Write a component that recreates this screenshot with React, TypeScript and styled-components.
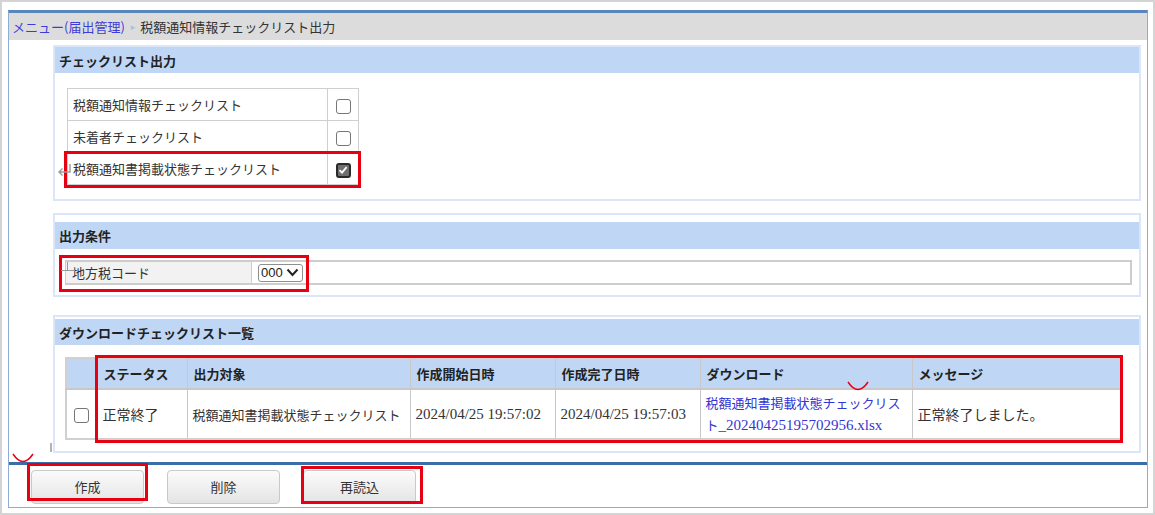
import React from 'react';
import styled, { createGlobalStyle } from 'styled-components';

const GlobalStyle = createGlobalStyle`
  html, body {
    margin: 0;
    padding: 0;
    background: #ffffff;
  }
  body {
    font-family: 'Noto Sans CJK JP', 'Liberation Sans', sans-serif;
    font-size: 13px;
    color: #333333;
  }
`;

const JA = `'Noto Sans CJK JP', 'Liberation Sans', sans-serif`;
const SERIF = `'Liberation Serif', 'Noto Sans CJK JP', serif`;

interface Rect {
  x: number;
  y: number;
  w: number;
  h: number;
}

const redBoxes: Rect[] = [
  { x: 64, y: 151, w: 297, h: 37 },
  { x: 59, y: 255, w: 250, h: 37 },
  { x: 95, y: 355, w: 1028, h: 88 },
  { x: 27, y: 463, w: 121, h: 38 },
  { x: 301, y: 466, w: 122, h: 38 },
];

const checklist = [
  { label: '税額通知情報チェックリスト', checked: false },
  { label: '未着者チェックリスト', checked: false },
  { label: '税額通知書掲載状態チェックリスト', checked: true },
];

export default function App() {
  return (
    <>
      <GlobalStyle />
      <Page>
        <Frame>
          <Breadcrumb>
            <CrumbLink href='#'>メニュー(届出管理)</CrumbLink>
            <CrumbArrow>▸</CrumbArrow>
            <CrumbCurrent>税額通知情報チェックリスト出力</CrumbCurrent>
          </Breadcrumb>

          <Content>
            <Section $mt={5} $pt={0} $pb={14}>
              <SectionHeader>チェックリスト出力</SectionHeader>
              <ChecklistTable>
                <tbody>
                  {checklist.map(item => (
                    <tr key={item.label}>
                      <LabelCell>{item.label}</LabelCell>
                      <CheckCell>
                        <CheckBox $checked={item.checked}>
                          {item.checked && (
                            <svg width='10' height='10' viewBox='0 0 10 10'>
                              <path
                                d='M1.5 5.2 L4 7.6 L8.6 2.2'
                                fill='none'
                                stroke='#ffffff'
                                strokeWidth='1.8'
                              />
                            </svg>
                          )}
                        </CheckBox>
                      </CheckCell>
                    </tr>
                  ))}
                </tbody>
              </ChecklistTable>
            </Section>

            <Section $mt={12} $pt={7} $pb={10}>
              <SectionHeader $h={27}>出力条件</SectionHeader>
              <ConditionRow>
                <ConditionLabel>地方税コード</ConditionLabel>
                <ConditionValue>
                  <Select>
                    000
                    <svg width='13' height='9' viewBox='0 0 13 9'>
                      <path
                        d='M1.5 1.5 L6.5 7 L11.5 1.5'
                        fill='none'
                        stroke='#222'
                        strokeWidth='2'
                      />
                    </svg>
                  </Select>
                </ConditionValue>
              </ConditionRow>
            </Section>

            <Section $mt={18} $pt={2} $pb={11}>
              <SectionHeader>ダウンロードチェックリスト一覧</SectionHeader>
              <ListTable>
                <colgroup>
                  <col style={{ width: 31 }} />
                  <col style={{ width: 90 }} />
                  <col style={{ width: 223 }} />
                  <col style={{ width: 145 }} />
                  <col style={{ width: 145 }} />
                  <col style={{ width: 212 }} />
                  <col style={{ width: 209 }} />
                </colgroup>
                <thead>
                  <tr>
                    <Th />
                    <Th>ステータス</Th>
                    <Th>出力対象</Th>
                    <Th>作成開始日時</Th>
                    <Th>作成完了日時</Th>
                    <Th>ダウンロード</Th>
                    <Th>メッセージ</Th>
                  </tr>
                </thead>
                <tbody>
                  <tr>
                    <Td $center>
                      <CheckBox $checked={false} />
                    </Td>
                    <Td $size={14}>正常終了</Td>
                    <Td>税額通知書掲載状態チェックリスト</Td>
                    <Td $serif>2024/04/25 19:57:02</Td>
                    <Td $serif>2024/04/25 19:57:03</Td>
                    <Td>
                      <FileLink href='#'>
                        <Ja>税額通知書掲載状態チェックリス</Ja>
                        <br />
                        <Ja>ト</Ja>_20240425195702956.xlsx
                      </FileLink>
                    </Td>
                    <Td $size={14}>正常終了しました。</Td>
                  </tr>
                </tbody>
              </ListTable>
            </Section>
          </Content>

          <Footer>
            <ActionButton type='button'>作成</ActionButton>
            <ActionButton type='button'>削除</ActionButton>
            <ActionButton type='button'>再読込</ActionButton>
          </Footer>
        </Frame>

        <Overlay>
          {redBoxes.map((r, i) => (
            <RedBox key={i} $x={r.x} $y={r.y} $w={r.w} $h={r.h} />
          ))}
          <Mark $x={12} $y={453}>
            <svg width='22' height='11' viewBox='0 0 22 11'>
              <path d='M1 1 Q11 16 21 1' fill='none' stroke='#e60012' strokeWidth='1.5' />
            </svg>
          </Mark>
          <Mark $x={847} $y={381}>
            <svg width='22' height='11' viewBox='0 0 22 11'>
              <path d='M1 1 Q11 16 21 1' fill='none' stroke='#e60012' strokeWidth='1.5' />
            </svg>
          </Mark>
          <Mark $x={57} $y={163}>
            <svg width='15' height='14' viewBox='0 0 15 14'>
              <path
                d='M13 1 V9 H2 M5.5 5.5 L2 9 L5.5 12.5'
                fill='none'
                stroke='#9a9a9a'
                strokeWidth='1.4'
              />
            </svg>
          </Mark>
          <Mark $x={61} $y={262}>
            <svg width='14' height='16' viewBox='0 0 14 16'>
              <path d='M0 8.5 H14 M6.5 0 V8.5' fill='none' stroke='#999' strokeWidth='1' />
            </svg>
          </Mark>
          <Mark $x={50} $y={443}>
            <svg width='2' height='9' viewBox='0 0 2 9'>
              <path d='M1 0 V9' stroke='#999' strokeWidth='1.5' />
            </svg>
          </Mark>
        </Overlay>
      </Page>
    </>
  );
}

const Page = styled.div`
  position: relative;
  box-sizing: border-box;
  width: 1155px;
  height: 515px;
  border: 2px solid #d4d4d4;
  padding: 8px 5px 5px 6px;
  background: #ffffff;
`;

const Frame = styled.div`
  box-sizing: border-box;
  width: 1140px;
  height: 498px;
  display: flex;
  flex-direction: column;
  border: 1px solid #8eadd6;
  border-top: 3px solid #5a86bd;
  background: #ffffff;
`;

const Breadcrumb = styled.div`
  height: 27px;
  flex: none;
  display: flex;
  align-items: center;
  padding-left: 3px;
  background: #dcdcdc;
  font-size: 13px;
`;

const CrumbLink = styled.a`
  color: #3c3cd8;
  text-decoration: none;
`;

const CrumbArrow = styled.span`
  color: #a6c0e4;
  font-size: 9px;
  margin: 0 5px 0 6px;
  font-family: 'DejaVu Sans', sans-serif;
`;

const CrumbCurrent = styled.span`
  color: #333333;
`;

const Content = styled.div`
  flex: 1;
  display: flex;
  flex-direction: column;
  padding: 0 6px 0 44px;
  overflow: hidden;
`;

interface SectionProps {
  $mt: number;
  $pt: number;
  $pb: number;
}

const Section = styled.div<SectionProps>`
  margin-top: ${p => p.$mt}px;
  padding-top: ${p => p.$pt}px;
  padding-bottom: ${p => p.$pb}px;
  border: 2px solid #dbe7f8;
`;

const SectionHeader = styled.div<{ $h?: number }>`
  height: ${p => p.$h ?? 26}px;
  display: flex;
  align-items: center;
  padding-left: 4px;
  background: #bfd7f5;
  font-weight: bold;
  font-size: 13px;
  color: #222222;
`;

const ChecklistTable = styled.table`
  margin: 15px 0 0 12px;
  border-collapse: collapse;
  width: 292px;
  table-layout: fixed;

  td {
    border: 1px solid #cfcfcf;
    height: 31px;
    padding: 0;
  }
`;

const LabelCell = styled.td`
  width: 254px;
  padding-left: 5px !important;
  font-size: 13px;
  color: #333333;
`;

const CheckCell = styled.td`
  text-align: center;
  vertical-align: middle;
`;

const CheckBox = styled.span<{ $checked: boolean }>`
  box-sizing: border-box;
  display: inline-flex;
  align-items: center;
  justify-content: center;
  width: 15px;
  height: 15px;
  vertical-align: middle;
  border-radius: 3px;
  border: ${p => (p.$checked ? '2px solid #2a2a2a' : '1px solid #767676')};
  background: ${p => (p.$checked ? '#6f6f6f' : '#ffffff')};
`;

const ConditionRow = styled.div`
  display: flex;
  margin: 11px 7px 0 10px;
  height: 25px;
  box-sizing: border-box;
  border: 2px solid #cdcdcd;
  border-left-width: 1px;
`;

const ConditionLabel = styled.div`
  width: 186px;
  display: flex;
  align-items: center;
  padding-left: 6px;
  box-sizing: border-box;
  background: #f2f2f2;
  border-right: 1px solid #cdcdcd;
  font-size: 13px;
`;

const ConditionValue = styled.div`
  flex: 1;
  display: flex;
  align-items: center;
  padding-left: 6px;
`;

const Select = styled.div`
  box-sizing: border-box;
  height: 18px;
  width: 45px;
  display: flex;
  align-items: center;
  justify-content: space-between;
  padding: 0 3px 0 2px;
  border: 1px solid #8f8f8f;
  border-radius: 3px;
  font-family: 'Liberation Sans', sans-serif;
  font-size: 13px;
  color: #222222;
`;

const ListTable = styled.table`
  margin: 12px 0 0 10px;
  width: 1055px;
  table-layout: fixed;
  border-collapse: collapse;
  border: 2px solid #d0d0d0;
`;

const Th = styled.th`
  height: 29px;
  padding: 0 6px;
  text-align: left;
  background: #bfd7f5;
  border: 1px solid #c8c8c8;
  border-bottom-width: 2px;
  font-size: 13px;
  font-weight: bold;
  color: #222222;
`;

interface TdProps {
  $serif?: boolean;
  $center?: boolean;
  $size?: number;
}

const Td = styled.td<TdProps>`
  height: 48px;
  padding: 0 5px;
  border: 1px solid #c8c8c8;
  text-align: ${p => (p.$center ? 'center' : 'left')};
  font-family: ${p => (p.$serif ? SERIF : JA)};
  font-size: ${p => (p.$serif ? 15 : p.$size ?? 13)}px;
  color: #333333;
  white-space: nowrap;
`;

const FileLink = styled.a`
  display: block;
  font-family: ${SERIF};
  font-size: 15px;
  line-height: 21px;
  color: #3434d4;
  text-decoration: none;
`;

const Ja = styled.span`
  font-family: ${JA};
  font-size: 13px;
`;

const Footer = styled.div`
  flex: none;
  height: 45px;
  box-sizing: border-box;
  border-top: 3px solid #3a6ea8;
  display: flex;
  align-items: center;
  gap: 23px;
  padding: 1px 0 0 22px;
`;

const ActionButton = styled.button`
  width: 113px;
  height: 34px;
  border: 1px solid #c9c9c9;
  border-radius: 4px;
  background: linear-gradient(#fbfbfb, #e4e4e4);
  font-family: ${JA};
  font-size: 13px;
  color: #333333;
  cursor: pointer;
`;

const Overlay = styled.div`
  position: absolute;
  inset: -2px;
  pointer-events: none;
`;

const RedBox = styled.div<{ $x: number; $y: number; $w: number; $h: number }>`
  position: absolute;
  box-sizing: border-box;
  left: ${p => p.$x}px;
  top: ${p => p.$y}px;
  width: ${p => p.$w}px;
  height: ${p => p.$h}px;
  border: 3px solid #e60012;
`;

const Mark = styled.div<{ $x: number; $y: number }>`
  position: absolute;
  left: ${p => p.$x}px;
  top: ${p => p.$y}px;
  line-height: 0;
`;
